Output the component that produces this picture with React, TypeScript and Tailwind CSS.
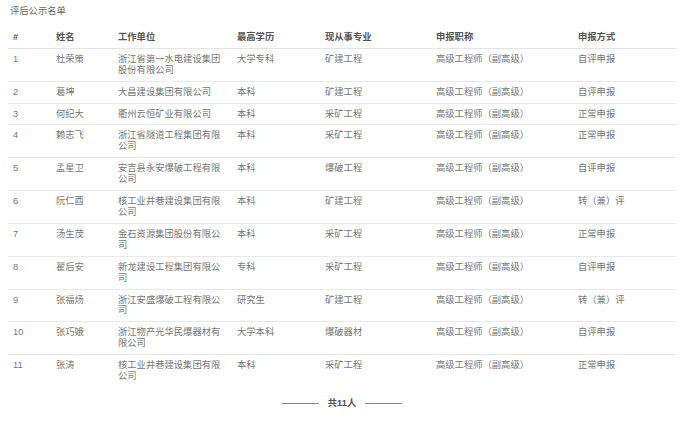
const rows = [
  ['1', '杜荣策', '浙江省第一水电建设集团股份有限公司', '大学专科', '矿建工程', '高级工程师（副高级）', '自评申报'],
  ['2', '葛坤', '大昌建设集团有限公司', '本科', '矿建工程', '高级工程师（副高级）', '自评申报'],
  ['3', '何纪大', '衢州云恒矿业有限公司', '本科', '采矿工程', '高级工程师（副高级）', '正常申报'],
  ['4', '赖志飞', '浙江省隧道工程集团有限公司', '本科', '采矿工程', '高级工程师（副高级）', '正常申报'],
  ['5', '孟星卫', '安吉县永安爆破工程有限公司', '本科', '爆破工程', '高级工程师（副高级）', '自评申报'],
  ['6', '阮仁酉', '核工业井巷建设集团有限公司', '本科', '矿建工程', '高级工程师（副高级）', '转（兼）评'],
  ['7', '汤生茂', '金石资源集团股份有限公司', '本科', '采矿工程', '高级工程师（副高级）', '正常申报'],
  ['8', '翟后安', '新龙建设工程集团有限公司', '专科', '采矿工程', '高级工程师（副高级）', '自评申报'],
  ['9', '张福炀', '浙江安盛爆破工程有限公司', '研究生', '矿建工程', '高级工程师（副高级）', '转（兼）评'],
  ['10', '张巧娥', '浙江物产光华民爆器材有限公司', '大学本科', '爆破器材', '高级工程师（副高级）', '自评申报'],
  ['11', '张涛', '核工业井巷建设集团有限公司', '本科', '采矿工程', '高级工程师（副高级）', '正常申报'],
];

const headers = ['#', '姓名', '工作单位', '最高学历', '现从事专业', '申报职称', '申报方式'];
const widths = ['w-[43px]', 'w-[62px]', 'w-[119px]', 'w-[88px]', 'w-[111px]', 'w-[142px]', 'w-[103px]'];

export default function App() {
  return (
    <div
      className="w-[692px] h-[421px] bg-white pl-2 pt-[6px] text-[9.3px] leading-[10.9px] text-[#777]"
      style={{ fontFamily: '"Liberation Sans", "Noto Sans CJK SC", sans-serif' }}
    >
      <div className="w-[668px]">
        <div className="pl-[2px] text-[#666]">评后公示名单</div>

        <table className="mt-[10px] w-[668px] table-fixed border-collapse">
          <colgroup>
            {widths.map((w, i) => (
              <col key={i} className={w} />
            ))}
          </colgroup>
          <thead>
            <tr className="border-b border-[#e4e4e4]">
              {headers.map((h) => (
                <th key={h} className="px-[5px] pt-[5px] pb-[5px] text-left font-bold text-[#555]">
                  {h}
                </th>
              ))}
            </tr>
          </thead>
          <tbody>
            {rows.map((r, i) => (
              <tr key={r[0]} className={i < rows.length - 1 ? 'border-b border-[#e9e9e9]' : ''}>
                {r.map((c, j) => (
                  <td key={j} className="px-[5px] pt-[5px] pb-[5px] align-top">
                    {c}
                  </td>
                ))}
              </tr>
            ))}
          </tbody>
        </table>

        <div className="mt-[11px] flex items-center justify-center gap-[9px]">
          <div className="h-px w-[37px] bg-[#888]" />
          <span className="font-semibold text-[#555]">共11人</span>
          <div className="h-px w-[37px] bg-[#888]" />
        </div>
      </div>
    </div>
  );
}
